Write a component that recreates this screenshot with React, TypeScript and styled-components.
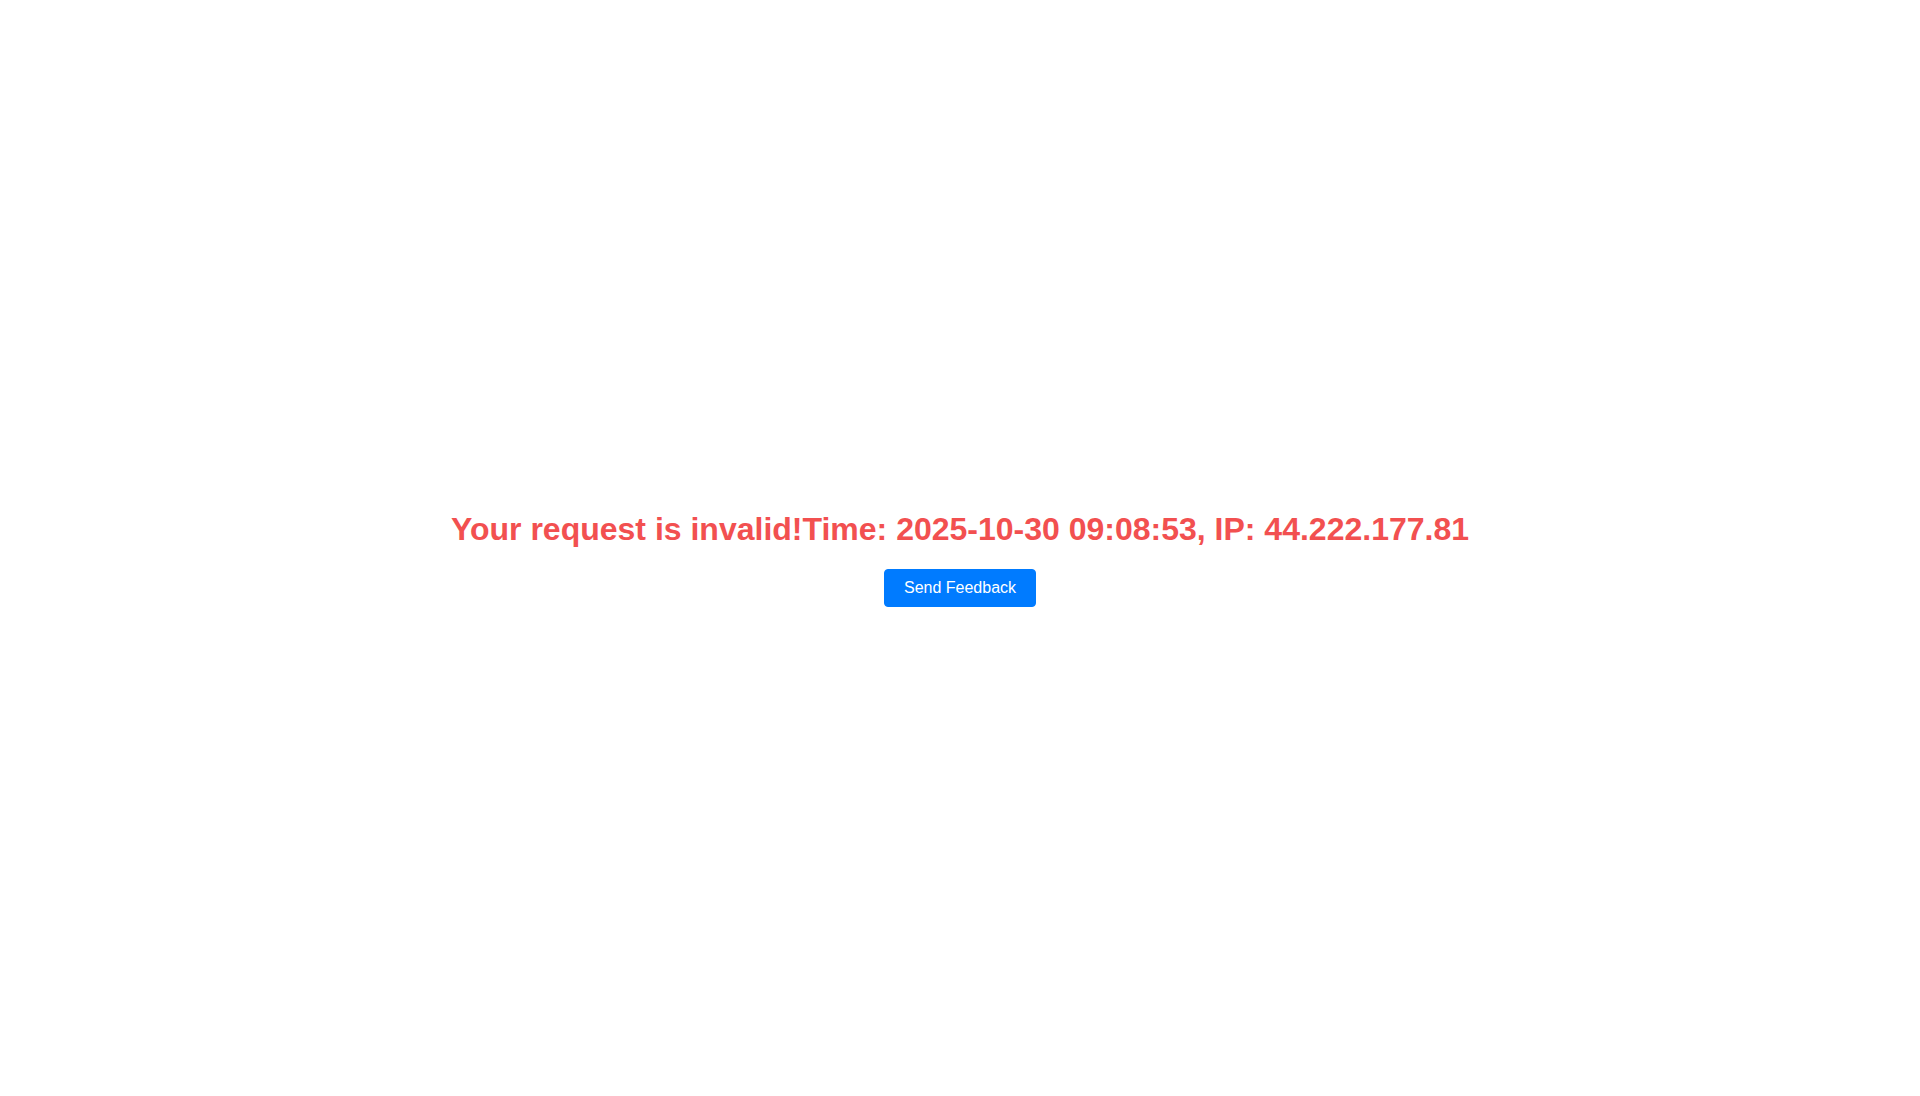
import * as React from "react";
import styled, {createGlobalStyle} from "styled-components";

const GlobalStyle = createGlobalStyle`
  html, body {
    margin: 0;
    padding: 0;
    background: #ffffff;
  }
  body {
    font-family: "Liberation Sans", Arial, Helvetica, sans-serif;
  }
`

export default function App() {
    return <Page>
        <GlobalStyle/>
        <Message>Your request is invalid!Time: 2025-10-30 09:08:53, IP: 44.222.177.81</Message>
        <FeedbackButton type="button">Send Feedback</FeedbackButton>
    </Page>
}

const Page = styled.div`
  min-height: 100vh;
  box-sizing: border-box;
  padding-top: 21px;
  display: flex;
  flex-direction: column;
  align-items: center;
  justify-content: center;
`

const Message = styled.h1`
  margin: 0 0 21px 0;
  font-family: "Liberation Sans", Arial, sans-serif;
  font-size: 32px;
  font-weight: 700;
  line-height: normal;
  color: #f25050;
  text-align: center;
`

const FeedbackButton = styled.button`
  height: 38px;
  padding: 0 19px;
  border: 1px solid #007bff;
  border-radius: 4px;
  background-color: #007bff;
  color: #ffffff;
  font-family: "Liberation Sans", Arial, sans-serif;
  font-size: 16px;
  line-height: 1.5;
  cursor: pointer;
`
